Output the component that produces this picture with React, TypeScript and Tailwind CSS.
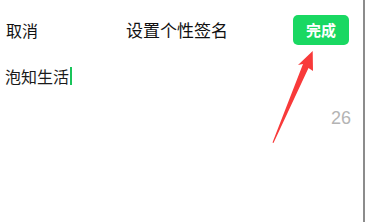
import React from "react";

export default function App() {
  return (
    <div
      className="relative w-[365px] h-[222px] bg-white border-r-2 border-[#8c8c8c] overflow-hidden"
      style={{ fontFamily: '"Noto Sans CJK SC", "Noto Sans", sans-serif' }}
    >
      <div className="flex items-center pt-[15px] pl-[6px] pr-[14px]">
        <span className="text-[16px] leading-[30px] text-[#111]">取消</span>
        <span className="ml-[88px] text-[17px] leading-[30px] text-[#111]">设置个性签名</span>
        <div className="flex-1" />
        <button className="w-[56px] h-[30px] rounded-[5px] bg-[#19d862] text-white text-[15px] font-bold leading-[30px]">
          完成
        </button>
      </div>
      <div className="flex items-center pl-[5px] mt-[20px] h-[22px]">
        <span className="text-[16px] leading-[22px] text-[#1a1a1a]">泡知生活</span>
        <span className="ml-[1px] w-[2px] h-[18px] bg-[#19c45a]" />
      </div>
      <div
        className="flex justify-end pr-[12px] mt-[21px] text-[18px] leading-[20px] text-[#b4b4b4]"
        style={{ fontFamily: '"Liberation Sans", Arial, sans-serif', fontWeight: 300 }}
      >
        26
      </div>
      <svg className="absolute left-0 top-0" width="365" height="222" viewBox="0 0 365 222">
        <polygon
          points="312.7,51 313,71 308.5,68 273.5,143 272.5,142.5 303,64 298,65"
          fill="#f83a3a"
        />
      </svg>
    </div>
  );
}
